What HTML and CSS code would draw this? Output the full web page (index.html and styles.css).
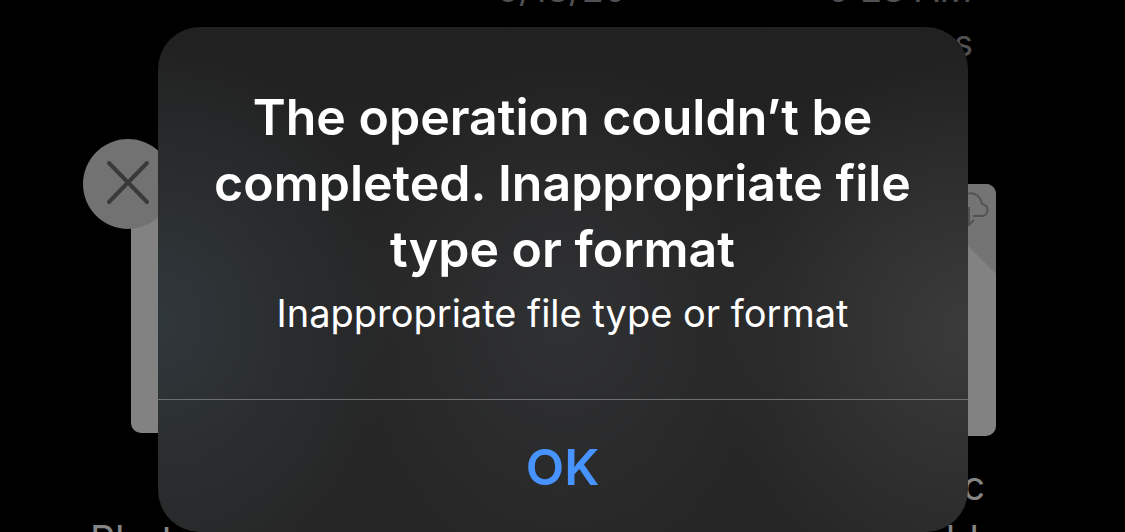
FILE: index.html
```html
<!DOCTYPE html>
<html lang="en">
<head>
<meta charset="utf-8">
<title>Files</title>
<link rel="stylesheet" href="styles.css">
</head>
<body>
<div class="screen">
  <main class="files">
    <section class="column">
      <div class="meta"></div>
      <div class="preview"><div class="thumb thumb-plain">
        <button class="close" type="button" aria-label="Close">
          <svg viewBox="0 0 90 90" aria-hidden="true"><path d="M26 24 64 63M64 24 26 63"/></svg>
        </button>
      </div></div>
      <p class="name name-left"><br>Photo</p>
    </section>
    <section class="column">
      <div class="meta">6/18/20</div>
    </section>
    <section class="column">
      <div class="meta">9:28 AM<br><span class="size">s</span></div>
      <div class="preview"><div class="thumb thumb-doc">
        <svg class="page" viewBox="0 0 192 252" aria-hidden="true">
          <path class="fold" d="M102 0H192V90Z"/>
          <path class="cloud" d="M160 32H156C147 31 147 20 155 19C155 8 175 4 178 20C186 22 185 32 177 32H169M165 23V41M160 36 165 41 170 36"/>
        </svg>
      </div></div>
      <p class="name name-right">c<br><span class="line-end">ld</span></p>
    </section>
  </main>
  <div class="alert" role="alertdialog" aria-labelledby="alert-title" aria-describedby="alert-text">
    <div class="alert-body">
      <h1 class="alert-title" id="alert-title">The operation couldn’t be completed. Inappropriate file type or format</h1>
      <p class="alert-text" id="alert-text">Inappropriate file type or format</p>
    </div>
    <button class="alert-action" type="button">OK</button>
  </div>
</div>
</body>
</html>
```
FILE: styles.css
```css
* {
  box-sizing: border-box;
}

body {
  margin: 0;
  background: #000;
  color: #fff;
  font-family: Inter, "Liberation Sans", sans-serif;
}

.screen {
  position: relative;
  height: 100vh;
  overflow: hidden;
}

.files {
  display: grid;
  grid-template-columns: repeat(3, 1fr);
  padding: 0 56px 0 54px;
  margin-top: -38px;
}

.meta {
  height: 222px;
  color: #505052;
  font-size: 36px;
  line-height: 54px;
  text-align: center;
}

.size {
  display: block;
  padding-right: 96px;
  text-align: right;
}

.preview {
  display: flex;
  justify-content: center;
  height: 252px;
}

.thumb {
  position: relative;
  border-radius: 10px;
  background: #828282;
  overflow: hidden;
}

.thumb-plain {
  width: 184px;
  height: 249px;
  overflow: visible;
}

.thumb-doc {
  width: 192px;
}

.page {
  display: block;
  fill: none;
}

.fold {
  fill: #747474;
}

.cloud {
  stroke: #525252;
  stroke-width: 2;
}

.close {
  position: absolute;
  top: -45px;
  left: -48px;
  width: 90px;
  height: 90px;
  padding: 0;
  border: 0;
  border-radius: 50%;
  background: #727272;
}

.close svg {
  display: block;
  fill: none;
  stroke: #3a3a3c;
  stroke-width: 4;
  stroke-linecap: round;
}

.name {
  margin: 23px 0 0;
  color: #858585;
  font-size: 39px;
  line-height: 54px;
}

.name-left {
  padding-left: 36px;
}

.name-right {
  padding-right: 84px;
  text-align: right;
}

.line-end {
  padding-right: 6px;
}

.size,
.name-right {
  white-space: nowrap;
}

.alert {
  position: absolute;
  top: 27px;
  left: 50%;
  width: 72%;
  transform: translateX(-50%);
  border-radius: 42px;
  overflow: hidden;
  background:
    radial-gradient(ellipse 240px 270px at 0 58%, #30373b, transparent),
    radial-gradient(ellipse 260px 270px at 100% 60%, #3b3b3b, transparent),
    radial-gradient(ellipse 220px 260px at 50% 58%, #303133, transparent),
    linear-gradient(#212121, #252525 50%, #262626);
}

.alert-body {
  padding: 57px 56px 60px;
  border-bottom: 1px solid #6d6f70;
  text-align: center;
}

.alert-title {
  margin: 0;
  font-size: 50px;
  font-weight: 600;
  line-height: 66px;
}

.alert-text {
  margin: 5px 0 0;
  font-size: 38px;
  line-height: 52px;
}

.alert-action {
  display: block;
  width: 100%;
  height: 132px;
  padding: 2px 0 0;
  border: 0;
  background: none;
  color: #4793ff;
  font: 600 50px/66px Inter, "Liberation Sans", sans-serif;
}
```
